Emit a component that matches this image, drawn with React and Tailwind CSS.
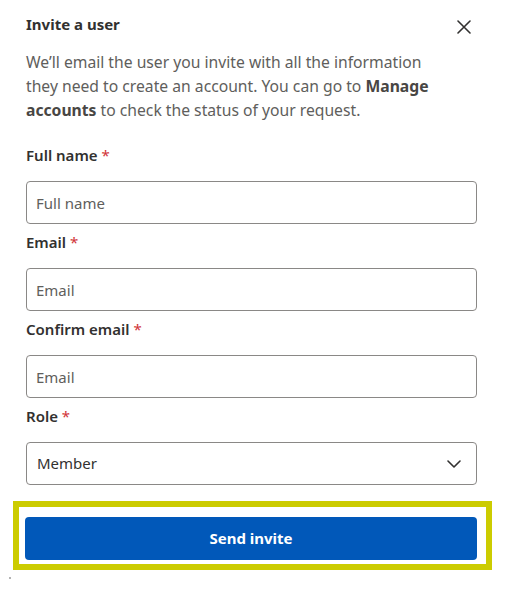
import React from 'react';

const font = { fontFamily: '"Noto Sans", "Open Sans", Arial, sans-serif' };

const Field = ({ label, children }) => (
  <div className="flex flex-col">
    <label className="h-6 text-[15px] leading-6 font-semibold text-[#323130]">
      {label} <span className="text-[#d13438] font-normal">*</span>
    </label>
    <div className="mt-[14px] mb-[6px]">{children}</div>
  </div>
);

const TextInput = ({ placeholder }) => (
  <input
    type="text"
    placeholder={placeholder}
    className="w-full h-[43px] rounded-[4px] border border-[#8a8886] bg-white px-[9px] text-[15px] text-[#323130] placeholder:text-[#605e5c] outline-none"
  />
);

export default function App() {
  return (
    <div className="relative w-[526px] h-[589px] bg-white" style={font}>
      <div className="w-[451px] ml-[26px] pt-[12px]">
        {/* Header */}
        <div className="flex items-center justify-between h-6">
          <h2 className="text-[15px] leading-6 font-bold text-[#323130]">Invite a user</h2>
          <button className="mr-[6px] mt-[6px] text-[#323130]" aria-label="Close">
            <svg width="14" height="14" viewBox="0 0 14 14" fill="none">
              <path d="M1 1L13 13M13 1L1 13" stroke="currentColor" strokeWidth="1.6" strokeLinecap="round" />
            </svg>
          </button>
        </div>

        <p className="mt-[14px] max-w-[415px] text-[15.7px] leading-6 text-[#605e5c]">
          We’ll email the user you invite with all the information they need to create an account. You can go to{' '}
          <span className="font-bold text-[#484644]">Manage accounts</span> to check the status of your request.
        </p>

        <div className="mt-[21px] flex flex-col">
          <Field label="Full name">
            <TextInput placeholder="Full name" />
          </Field>
          <Field label="Email">
            <TextInput placeholder="Email" />
          </Field>
          <Field label="Confirm email">
            <TextInput placeholder="Email" />
          </Field>
          <Field label="Role">
            <div className="flex items-center justify-between h-[43px] rounded-[4px] border border-[#8a8886] bg-white pl-[10px] pr-[15px] text-[15px] text-[#323130]">
              <span>Member</span>
              <svg width="14" height="8" viewBox="0 0 14 8" fill="none">
                <path d="M1 1L7 7L13 1" stroke="currentColor" strokeWidth="1.6" strokeLinecap="round" strokeLinejoin="round" />
              </svg>
            </div>
          </Field>
        </div>

        {/* Highlighted action */}
        <div className="mt-[10px] -ml-[13px] w-[479px] border-[6px] border-[#cccc00] pt-[10px] pb-[4px] pl-[6px] pr-[9px]">
          <button className="w-full h-[43px] rounded-[4px] bg-[#0158b9] text-white text-[15px] font-bold">
            Send invite
          </button>
        </div>
      </div>

      <span className="absolute left-[9px] top-[577px] w-[2px] h-[2px] rounded-full bg-[#9a9a9a]" />
    </div>
  );
}
